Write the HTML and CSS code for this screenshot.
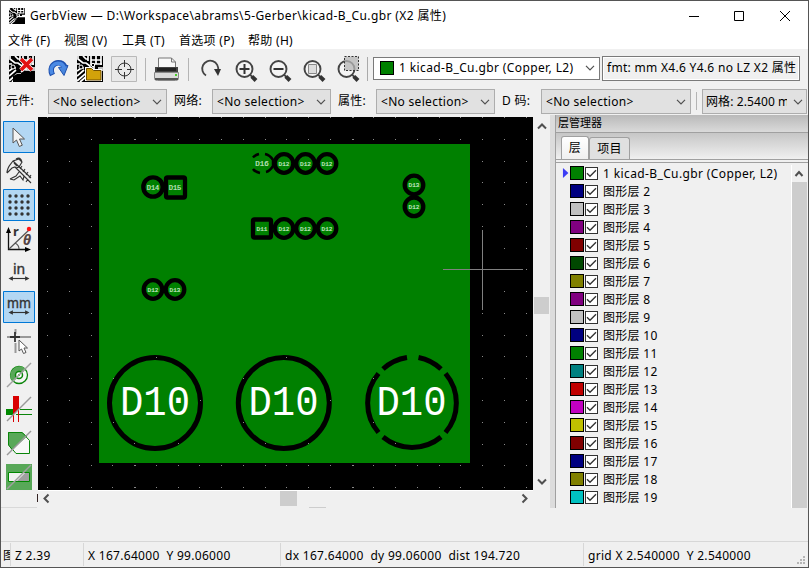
FILE: index.html
```html
<!DOCTYPE html>
<html lang="zh-CN">
<head>
<meta charset="utf-8">
<title>GerbView</title>
<link rel="stylesheet" href="styles.css">
</head>
<body>
<svg width="0" height="0" class="defs">
  <defs>
    <symbol id="chev" viewBox="0 0 10 6"><path d="M1 .8 5 4.8 9 .8" fill="none" stroke="#505050" stroke-width="1.2"/></symbol>
    <symbol id="tick" viewBox="0 0 11 11"><path d="M1 5.300 4 8.300 10 2.200" fill="none" stroke="#333" stroke-width="1.400"/></symbol>
    <symbol id="mag" viewBox="0 0 26 26"><circle cx="10.500" cy="11" r="8" fill="#f4f4f4" stroke="#444" stroke-width="1.9"/><path d="m16 16.600 3 3" stroke="#444" stroke-width="2"/><path d="m17.800 18.300 4.200 4.200" stroke="#333" stroke-width="4"/></symbol>
    <symbol id="dbl" viewBox="0 0 26 8"><path d="M3 4h20" stroke="#333" stroke-width="1.3"/><path d="M1 4l5-2.6v5.2zM25 4l-5-2.6v5.2z" fill="#333"/></symbol>
    <symbol id="pcb" viewBox="0 0 26 26"><path fill="#000" d="M0 0h26v26H0z"/><path fill="none" stroke="#fff" stroke-width="1.700" d="M1 0v3l5 4h3l4 3v4M6 0l3 3h2M0 8h3M0 15l4-3h3M0 20l7-6M0 25l8-7h4M3 26l7-6M11 0v5M14 0v9M19 0v8M24 0v9M14 4h10M14 8h11M17 10v4h9M21 12h5M16 13l-4 3"/><circle cx="4" cy="11" r="2" stroke="#fff" fill="#000"/><circle cx="16" cy="9" r="1.7" stroke="#fff" fill="#000"/></symbol>
  </defs>
</svg>
<div class="window">
  <header class="title">
    <svg class="app" viewBox="0 0 26 26"><use href="#pcb"/></svg>
    <span class="caption">GerbView — D:\Workspace\abrams\5-Gerber\kicad-B_Cu.gbr (X2 属性)</span>
    <svg class="winctl" width="110" height="20" viewBox="685 5 110 20" fill="none" stroke="#000"><path d="M689 15.500h10M734.500 10.500h9v9h-9zM780 10l10 10M790 10l-10 10"/></svg>
  </header>
  <nav class="menu"><span class="m1">文件 (F)</span><span class="m2">视图 (V)</span><span class="m3">工具 (T)</span><span class="m4">首选项 (P)</span><span class="m5">帮助 (H)</span></nav>

  <div class="bar">
    <svg class="tools" width="370" height="38" viewBox="1 49 370 38">
      <use href="#pcb" x="9" y="56" width="26" height="26"/><path d="M13 76l4-2h18v8H13z"/><path d="m21 59 11 11M32 59 21 70" stroke="#fff" stroke-width="5"/><path d="m21 59 11 11M32 59 21 70" stroke="#e31111" stroke-width="3.700"/>
      <path d="M52.500 75c-4-8 2-13.500 8-12q3.500 1 4.500 5" fill="none" stroke="#1d4fae" stroke-width="5.500"/><path d="M58.500 67.500l9.500-2-4 10z" fill="#4987dd" stroke="#1d4fae"/><path d="M52.200 74c-3.200-7 2-12 7.800-10.500q3.500 1 4.500 5" fill="none" stroke="#4b8ae4" stroke-width="3.500"/>
      <use href="#pcb" x="77" y="56" width="26" height="26"/><path d="M85 67h7l2 2h8v12H85z" fill="#fff"/><path d="M86.500 68.500h5l2 2h7.500v9.500H86.500z" fill="#d2a20a" stroke="#704f00"/>
      <path d="M111.500 56.500h25v25h-25z" fill="#e9e9e9" stroke="#b9b9b9"/><g fill="none" stroke="#333"><circle cx="124.500" cy="69.500" r="6.500"/><path d="M124.500 60v7M124.500 72v7M115 69.500h7M127 69.500h7"/></g>
      <path d="M145.500 58v23M188.500 58v23" stroke="#b4b4b4"/>
      <path d="M158.500 58h13l4 4v9h-17z" fill="#f8f8f8" stroke="#777"/><path d="M171.500 58v4h4" fill="none" stroke="#777"/><path d="M155 67h23v9h-23z" fill="#444"/><path d="M157 68h19v3h-19z" fill="#222"/><path d="M154.500 72.500h24v6q0 2-3 2h-18q-3 0-3-2z" fill="#dadada" stroke="#888"/><path d="M155 78h23v2h-23z" fill="#555"/><path d="M175 74h2v2h-2z" fill="#48cf28"/>
      <path d="M206 75.500a8 8 0 1 1 12-5" fill="none" stroke="#444" stroke-width="1.800"/><path d="M214 69h7l-3 7z" fill="#333"/>
      <use href="#mag" x="234" y="58" width="26" height="26"/><path d="M239.500 69h10M244.500 64v10" stroke="#333" stroke-width="2"/>
      <use href="#mag" x="268" y="58" width="26" height="26"/><path d="M273.500 69h10" stroke="#333" stroke-width="2"/>
      <use href="#mag" x="302" y="58" width="26" height="26"/><path d="M308.500 64.500h8v9h-8z" fill="#ddd" stroke="#888"/>
      <use href="#mag" x="336" y="58" width="26" height="26"/><path d="M344.500 56.500h14v14h-14z" fill="#b6b6b6" fill-opacity=".75" stroke="#333" stroke-dasharray="2 1.500"/>
      <path d="M367.500 57v24" stroke="#aaa"/>
    </svg>
    <div class="layerbox"><i class="sw green"></i><span class="wide">1 kicad-B_Cu.gbr (Copper, L2)</span><svg class="cv"><use href="#chev"/></svg></div>
    <div class="fmt"><span>fmt: mm X4.6 Y4.6 no LZ X2 属性</span></div>
  </div>

  <div class="bar second">
    <label class="l1">元件:</label><div class="combo c1"><span>&lt;No selection&gt;</span><svg class="cv"><use href="#chev"/></svg></div>
    <label class="l2">网络:</label><div class="combo c1"><span>&lt;No selection&gt;</span><svg class="cv"><use href="#chev"/></svg></div>
    <label class="l3">属性:</label><div class="combo c1"><span>&lt;No selection&gt;</span><svg class="cv"><use href="#chev"/></svg></div>
    <label class="l4">D 码:</label><div class="combo c2"><span>&lt;No selection&gt;</span><svg class="cv"><use href="#chev"/></svg></div>
    <i class="sep"></i>
    <div class="combo c3"><span class="clip">网格: 2.5400 mm</span><svg class="cv"><use href="#chev"/></svg></div>
  </div>

  <main>
    <aside class="left">
      <svg width="37" height="393" viewBox="1 115 37 393">
        <g fill="#b3d7f3" stroke="#0078d7"><path d="M3.500 121.500h31v31h-31zM3.500 189.500h31v31h-31zM3.500 291.500h31v31h-31z"/></g>
        <path d="M13 128v15l3.500-3 2.800 6.500 3-1.300-2.800-6.200h5z" fill="#f3f3f3" stroke="#555"/>
        <g fill="none" stroke="#333" stroke-width="1.100"><path d="M7 173c0-6 3-8 6-12l6-2 3 3-3 5-3 1M7 173l5-5 3-1 16 16M13 161l18 17M22 162c-1-4-3-5-6-3M10 179l6-3 3-4M10 179l4 1 6-4 3 4 1-4M20 169l2-3M23 172l2-3M26 175l2-3M29 178l2-3M26 182l2-3M17 166l-3-3M15 167l7 7"/></g>
        <g fill="#333" id="gridicon"><circle cx="10" cy="196" r="1.700"/><circle cx="16" cy="196" r="1.700"/><circle cx="22" cy="196" r="1.700"/><circle cx="28" cy="196" r="1.700"/><circle cx="10" cy="202" r="1.700"/><circle cx="16" cy="202" r="1.700"/><circle cx="22" cy="202" r="1.700"/><circle cx="28" cy="202" r="1.700"/><circle cx="10" cy="208" r="1.700"/><circle cx="16" cy="208" r="1.700"/><circle cx="22" cy="208" r="1.700"/><circle cx="28" cy="208" r="1.700"/><circle cx="10" cy="214" r="1.700"/><circle cx="16" cy="214" r="1.700"/><circle cx="22" cy="214" r="1.700"/><circle cx="28" cy="214" r="1.700"/></g>
        <path d="M8.500 230v19.500H27" fill="none" stroke="#111" stroke-width="1.300"/><path d="M6 233l2.500-6 2.500 6zM25 247l6 2.500-6 2.500z"/><path d="M9 249l20-19M15 243q4 2 4 6" fill="none" stroke="#555" stroke-width="1.200"/><circle cx="29" cy="229" r="2.200" fill="#f11"/>
        <text x="13" y="236" class="ic b">r</text><text x="23" y="245" class="ic th">θ</text>
        <text x="13" y="274" class="ic in">in</text><use href="#dbl" x="6" y="275" width="26" height="7"/>
        <text x="7" y="308" class="ic mm" textLength="24" lengthAdjust="spacingAndGlyphs">mm</text><use href="#dbl" x="6" y="309" width="26" height="7"/>
        <path d="M15.500 329v5M15.500 343v10M7 337h4M20 337h11" stroke="#999" stroke-width="2"/><path d="M15 332v10M10 337h10" stroke="#333" stroke-width="1.800"/><path d="M19 340v11l2.500-2 2 4.500 2.500-1-2-4.500h3.500z" fill="#fff" stroke="#555"/>
        <circle cx="19" cy="375" r="8.500" fill="#f6f6f6" stroke="#0a850a" stroke-width="1.300"/><path d="M13 382A8.500 8.500 0 0 1 26 369z" fill="#58a858"/><circle cx="19" cy="375" r="3.500" fill="#fff" stroke="#0a850a" stroke-width="1.500"/><circle cx="19" cy="375" r="1" fill="#0a850a"/><path d="M7 387 31 363" stroke="#a1a1a1" stroke-width="1.500"/>
        <path d="M6 409h13l-6 6H6z" fill="#080"/><path d="M20 409.500h12M16 414.500h16" stroke="#0a850a"/><path d="M13 396h6v12l-6 7z" fill="#d90000"/><path d="M13.500 415v7M18.500 407v15" stroke="#d90000"/><path d="M7 421 31 397" stroke="#999" stroke-width="1.500"/>
        <path d="M8.500 432.500H22l7.500 8v13H16l-7.500-9z" fill="#f8f8f8" stroke="#0a850a"/><path d="M8.500 432.500H22l5 4L12 450l-3.500-5z" fill="#58a858"/><path d="M27 437l-5-4.500H8.500V445l4 5" fill="none" stroke="#0a850a"/><path d="M7 455 31 431" stroke="#999" stroke-width="1.500"/>
        <path d="M6 464h26v26H6z" fill="#58a858"/><path d="M8.500 472.500h21v9h-21z" fill="#f1f1f1" stroke="#080"/><path d="M25 473h4v8H17z" fill="#a0a0a0"/><path d="M7 489 31 465" stroke="#a0a0a0" stroke-width="1.500"/>
        <path d="M1 507.500h36" stroke="#d9d9d9"/><path d="M37.500 494v8" stroke="#322"/>
      </svg>
    </aside>
    <section class="view">
      <svg id="canvas" width="495" height="373" viewBox="38 117 495 373">
        <path d="M38 117h495v373H38z"/>
        <path d="M99 144h371v319H99z" fill="#008000"/>
        <g id="pads" fill="none" stroke="#000" stroke-width="4.300">
          <g stroke-width="5"><circle cx="155" cy="403" r="45.500"/><circle cx="283.800" cy="403" r="45.500"/>
          <path d="M407 357.500A45.800 45.800 0 0 0 383 369M418.500 357.500A46 46 0 0 1 441 369M378.500 373.500A45.500 45.500 0 0 0 378.500 432.500M445.500 373.500A45.500 45.500 0 0 1 445.500 432.500M383 437A45.500 45.500 0 0 0 441 437"/></g>
          <circle cx="153" cy="187" r="9.700"/><rect x="166" y="177.500" width="19" height="20" rx="1.500"/>
          <circle cx="153" cy="289.500" r="9.300"/><circle cx="175" cy="289.500" r="9.300"/>
          <circle cx="284" cy="163.500" r="9.300"/><circle cx="305.500" cy="163.500" r="9.300"/><circle cx="327" cy="163.500" r="9.300"/>
          <rect x="253" y="219.500" width="18" height="18" rx="1.500"/><circle cx="284" cy="228.500" r="9.300"/><circle cx="305.500" cy="228.500" r="9.300"/><circle cx="327" cy="228.500" r="9.300"/>
          <circle cx="414" cy="185" r="9.300"/><circle cx="414" cy="206.800" r="9.300"/>
          <path stroke-width="2.500" d="M253 157.500q2-2.500 6-3.500M265 154q5 1 8 6v6q-3 5-7 6M253 169q2 3 7 4"/>
        </g>
        <g class="big"><text x="120" y="415" textLength="70" lengthAdjust="spacingAndGlyphs">D10</text><text x="248.500" y="415" textLength="70" lengthAdjust="spacingAndGlyphs">D10</text><text x="376.500" y="415" textLength="70" lengthAdjust="spacingAndGlyphs">D10</text></g>
        <g class="tiny"><text x="153" y="189.500" class="t14">D14</text><text x="175" y="189.500" class="t14">D15</text><text x="153" y="291.500">D12</text><text x="175" y="291.500">D13</text><text x="262" y="165.800" class="t16">D16</text><text x="284" y="165.500">D12</text><text x="305.500" y="165.500">D12</text><text x="327" y="165.500">D12</text><text x="262" y="230.800">D11</text><text x="284" y="230.800">D12</text><text x="305.500" y="230.800">D12</text><text x="327" y="230.800">D12</text><text x="414" y="187">D13</text><text x="414" y="208.800">D12</text></g>
        <g id="dots" fill="#8a8a8a"></g>
        <path d="M443 269.500h80M482.500 230v80" stroke="#808080"/>
      </svg>
      <svg class="vs" width="17" height="373" viewBox="533 117 17 373"><path d="M534 297h15v17h-15z" fill="#cdcdcd"/><path d="M538 128.500l4-4 4 4M538 479.500l4 4 4-4" fill="none" stroke="#505050" stroke-width="2"/></svg>
      <svg class="hs" width="512" height="18" viewBox="38 490 512 18"><path d="M38 490.500h495" stroke="#fff"/><path d="M280 491h17v15h-17zM309 507h17v1h-17z" fill="#cdcdcd"/><path d="M48.500 494.500l-4 4 4 4M522.500 494.500l4 4-4 4" fill="none" stroke="#505050" stroke-width="2"/></svg>
    </section>
    <i class="sash"></i>
    <section class="manager">
      <h2>层管理器</h2>
      <div class="tabs"><b class="on">层</b><b>项目</b></div>
      <div class="body"><ul id="layers"></ul><div class="scroll"><svg width="15" height="17" viewBox="0 0 15 17"><path d="M3.500 11l3.500-4 3.500 4" fill="none" stroke="#505050" stroke-width="2"/></svg><i></i></div></div>
    </section>
  </main>
  <footer>
    <div class="s0"><span>图</span></div><div class="s1">Z 2.39</div><div class="s2"><span>X 167.64000&nbsp; Y 99.06000</span></div><div class="s3"><span>dx 167.64000&nbsp; dy 99.06000&nbsp; dist 194.720</span></div><div class="s4"><span>grid X 2.540000&nbsp; Y 2.540000</span></div>
    <svg class="grip" width="9" height="9" viewBox="0 0 9 9"><path fill="#b5b5b5" d="M6 0h2v2H6zM3 3h2v2H3zM6 3h2v2H6zM0 6h2v2H0zM3 6h2v2H3zM6 6h2v2H6z"/></svg>
  </footer>
</div>
<script src="app.js"></script>
</body>
</html>
```
FILE: styles.css
```css
* { box-sizing: border-box; }
body { margin: 0; font: 12px/16px "Noto Sans", "Noto Sans CJK SC", sans-serif; color: #000; letter-spacing: .3px; }
.defs { position: absolute; }
svg { display: block; flex: none; letter-spacing: 0; }
.window { width: 809px; height: 568px; border: 1px solid #555; background: #f0f0f0; overflow: hidden; display: flex; flex-direction: column; white-space: nowrap; }
.title { height: 30px; background: #fff; display: flex; align-items: center; padding: 0 13px 0 8px; flex: none; }
.app { width: 16px; height: 16px; margin-right: 5px; }
.caption, .wide { letter-spacing: .38px; }
.winctl { margin-left: auto; }
.menu { height: 18px; background: #fff; display: flex; flex: none; padding-left: 7px; line-height: 19px; }
.m1 { width: 56px; } .m2 { width: 58px; } .m3 { width: 57px; } .m4 { width: 69px; }
.bar { height: 38px; display: flex; align-items: center; flex: none; }
.tools { margin-right: 2px; }
.layerbox { width: 227px; height: 23px; border: 1px solid #7a7a7a; background: #fff; display: flex; align-items: center; padding: 0 4px 0 6px; margin-right: 2px; }
.sw { display: block; width: 14px; height: 14px; border: 1px solid #000; flex: none; }
.green { background: #008000; margin-right: 5px; }
.cv { width: 10px; height: 6px; margin-left: auto; }
.fmt { width: 198px; height: 25px; border: 1px solid #7a7a7a; box-shadow: inset 0 0 0 1px #fff; padding: 3px 4px; }
.second { height: 28px; padding-left: 5px; align-items: flex-start; padding-top: 2px; }
.combo { height: 25px; border: 1px solid #adadad; background: #e1e1e1; display: flex; align-items: center; padding: 0 4px; }
.second label { line-height: 23px; }
.l1 { width: 42px; } .l2 { width: 38px; padding-left: 7px; box-sizing: content-box; } .l3 { width: 38px; padding-left: 7px; box-sizing: content-box; } .l4 { width: 39px; padding-left: 7px; box-sizing: content-box; }
.c1 { width: 119px; } .c2 { width: 150px; } .c3 { width: 105px; padding: 0 3px; }
.sep { width: 1px; height: 18px; background: #b4b4b4; margin: 3px 5px 0 5px; }
.clip { width: 81px; overflow: hidden; letter-spacing: .1px; }
main { height: 393px; display: flex; flex: none; }
.left { width: 37px; }
.view { width: 512px; display: grid; grid-template-columns: 495px 17px; grid-template-rows: 373px 18px; padding-top: 2px; }
.hs { grid-column: 1 / 3; }
.sash { width: 5px; background: #dcdcdc; }
.manager { width: 253px; border-left: 1px solid #a0a0a0; display: flex; flex-direction: column; }
.manager h2 { margin: 0; height: 18px; font-size: 11px; font-weight: 400; line-height: 16px; letter-spacing: 0; padding-left: 2px; background: linear-gradient(#b9b9b9, #dadada); border-bottom: 1px solid #a0a0a0; }
.tabs { height: 27px; display: flex; align-items: flex-end; padding-left: 5px; border-bottom: 1px solid #a0a0a0; background: linear-gradient(#c6c6c6, #f0f0f0); flex: none; }
.tabs b { width: 41px; height: 22px; font-weight: 400; text-align: center; line-height: 22px; background: #e0e0e0; border: 1px solid #a0a0a0; border-bottom: 0; border-radius: 3px 3px 0 0; }
.tabs .on { width: 28px; height: 23px; background: linear-gradient(#fff, #f0f0f0); }
.body { margin-top: 2px; border-top: 1px solid #a0a0a0; flex: 1; min-height: 0; display: flex; overflow: hidden; }
#layers { list-style: none; margin: 0; padding: 1px 0 0 6px; width: 235px; }
#layers li { height: 18px; display: flex; align-items: center; }
#layers span { padding-top: 2px; }
.mark { width: 8px; height: 10px; flex: none; }
.mark.on { background: #3d3df5; clip-path: polygon(12% 0, 80% 50%, 12% 100%); }
.cb { width: 13px; height: 13px; border: 1px solid #333; background: #fff; margin: 0 5px 0 1px; flex: none; }
.cb svg { width: 11px; height: 11px; }
.scroll { width: 16px; border-left: 1px solid #fff; margin-top: 2px; background: #f0f0f0; }
.scroll i { display: block; height: 340px; background: #cdcdcd; }
footer { margin-top: 33px; height: 25px; border-top: 1px solid #d7d7d7; display: flex; flex: none; position: relative; }
footer div { border-right: 1px solid #d7d7d7; margin-top: 1px; padding-left: 4px; overflow: hidden; line-height: 25px; }
.s0 { width: 10px; } .s1 { width: 73px; } .s2 { width: 197px; } .s3 { width: 303px; }
footer .s0 { padding-left: 2px; }
footer .s4 { width: 220px; border: 0; }
.grip { position: absolute; right: 2px; bottom: 1px; }
.ic { font: 14px "Noto Sans", sans-serif; fill: #333; }
.b { font-weight: 700; font-size: 13px; }
.th { font: italic bold 14px "Noto Sans", sans-serif; fill: #544; }
.in, .mm { stroke: #333; stroke-width: .4px; }
.big { font: 43px "Liberation Mono", monospace; fill: #fff; }
.tiny { font: 6px "Liberation Mono", monospace; fill: #c8e6c8; stroke: #c8e6c8; stroke-width: .2px; text-anchor: middle; }
.tiny .t14 { font-size: 7px; }
.tiny .t16 { font-size: 7.500px; }
```
FILE: app.js
```js
// Reference grid: visible only where no copper is drawn.
const NS = "http://www.w3.org/2000/svg";
const dots = document.getElementById("dots");
function dot(x, y, w) {
  const r = document.createElementNS(NS, "rect");
  r.setAttribute("x", x);
  r.setAttribute("y", y);
  r.setAttribute("width", w);
  r.setAttribute("height", 1);
  dots.appendChild(r);
}
for (let i = 0; i < 23; i++) {
  for (let j = 0; j < 18; j++) {
    const x = Math.round(47 + i * 21.75), y = Math.round(117 + j * 21.77);
    if (x >= 99 && x < 470 && y >= 144 && y < 463) continue;
    dot(x, y, i % 10 === 4 ? 2 : 1);
  }
}
[[156, 357], [113, 378], [200, 400], [113, 422], [134, 443], [178, 443], [286, 357], [243, 378], [330, 400], [243, 422], [265, 443], [308, 443], [373, 378], [373, 422], [395, 443]].forEach(p => dot(p[0], p[1], 1));

const colors = ["#008000", "#000080", "#c0c0c0", "#800080", "#800000", "#004800", "#808000", "#800080", "#c0c0c0", "#000080", "#008000", "#008080", "#c00000", "#c000c0", "#c0c000", "#800000", "#000080", "#808000", "#00c0c0"];
document.getElementById("layers").innerHTML = colors.map((c, i) =>
  `<li><i class="mark${i ? "" : " on"}"></i><i class="sw" style="background:${c}"></i><i class="cb"><svg><use href="#tick"/></svg></i><span${i ? "" : ' class="wide"'}>${i ? "图形层 " + (i + 1) : "1 kicad-B_Cu.gbr (Copper, L2)"}</span></li>`).join("");
```
